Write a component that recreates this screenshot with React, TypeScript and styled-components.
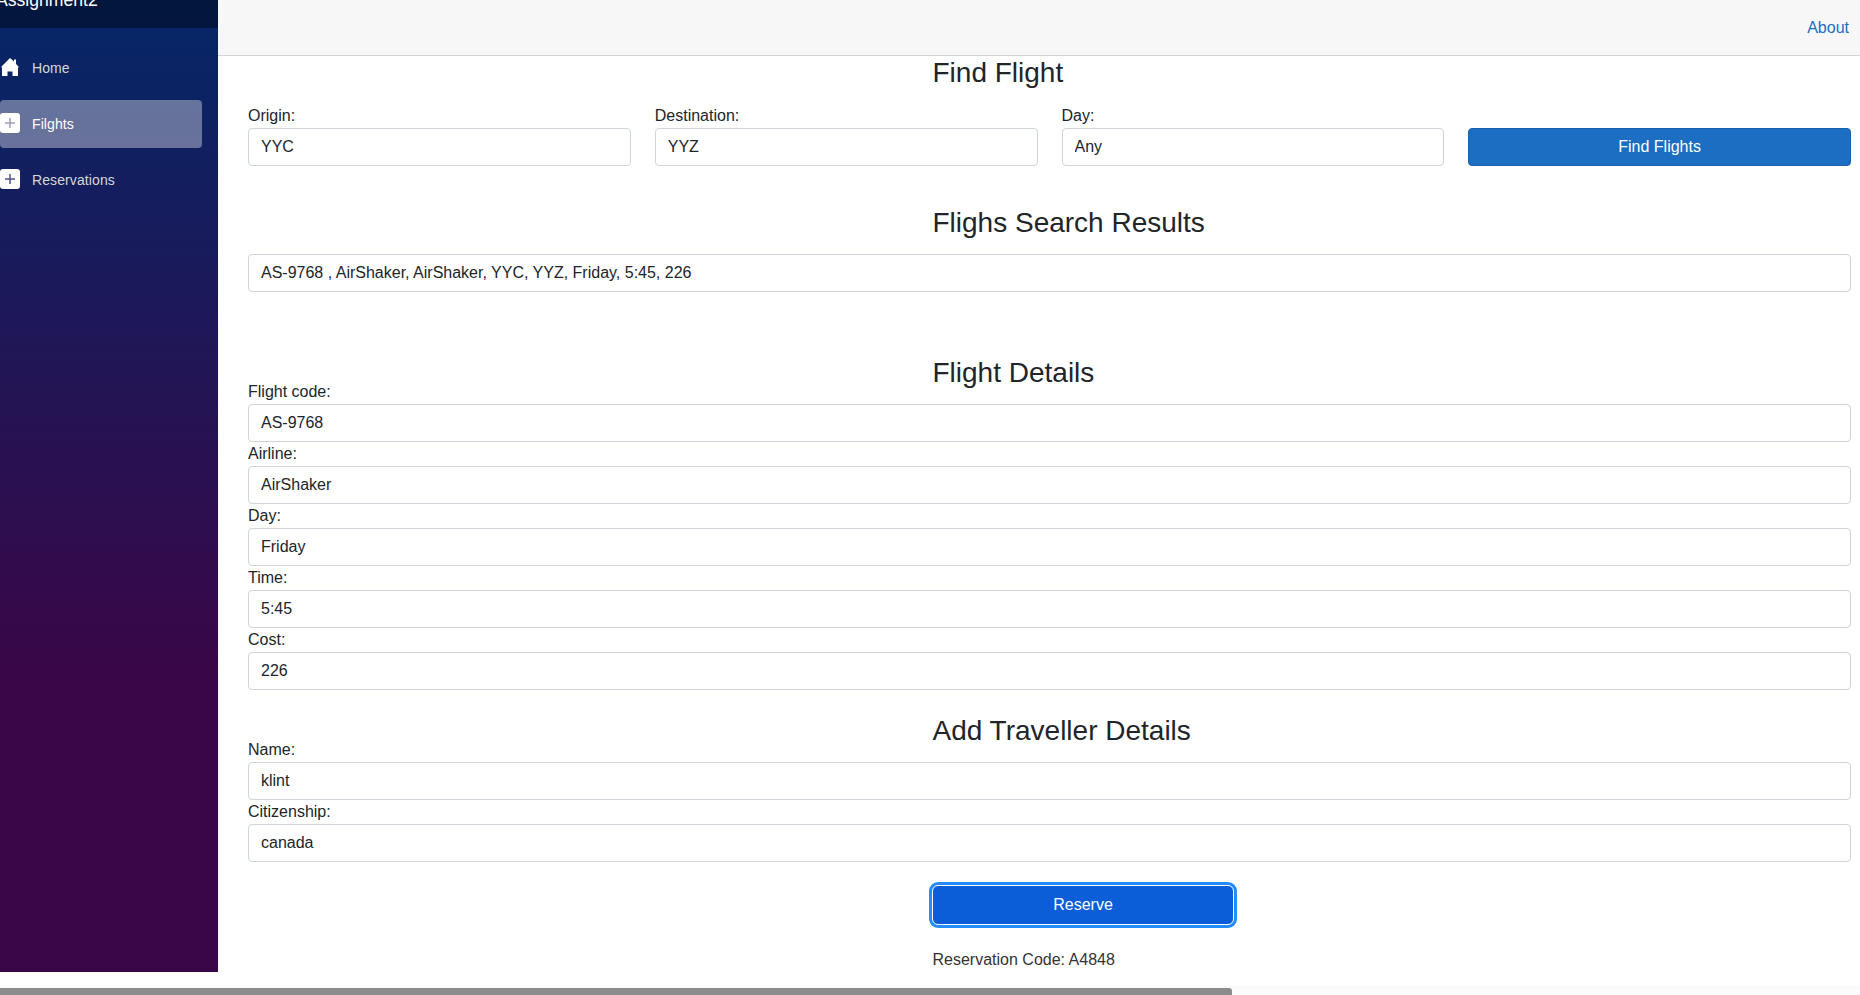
import React from "react";
import styled, { createGlobalStyle } from "styled-components";

const GlobalStyle = createGlobalStyle`
  html, body {
    margin: 0;
    padding: 0;
    height: 100%;
    overflow: hidden;
    background: #fff;
  }
  body {
    font-family: "Liberation Sans", Arial, sans-serif;
    font-size: 16px;
    line-height: 1.5;
    color: #212529;
  }
  * {
    box-sizing: border-box;
  }
`;

const Page = styled.div`
  height: 995px;
  display: flex;
  flex-direction: column;
  overflow: hidden;
`;

const Columns = styled.div`
  display: flex;
  height: 972px;
`;

const Sidebar = styled.nav`
  width: 218px;
  flex: none;
  background-image: linear-gradient(180deg, #052767 0%, #3a0647 70%);
`;

const Brand = styled.div`
  height: 28px;
  display: flex;
  align-items: flex-end;
  overflow: hidden;
  background: rgba(0, 0, 0, 0.4);
  color: #fff;
  font-size: 17.6px;
  line-height: 26px;
`;

const BrandText = styled.span`
  display: block;
  margin-left: -4px;
  padding-bottom: 15px;
`;

const NavList = styled.div`
  display: flex;
  flex-direction: column;
  gap: 8px;
  padding-top: 16px;
`;

const NavItem = styled.a<{ $active?: boolean }>`
  width: 202px;
  height: 48px;
  display: flex;
  align-items: center;
  gap: 12px;
  border-radius: 4px;
  font-size: 14px;
  letter-spacing: 0.1px;
  color: ${(p) => (p.$active ? "#fff" : "#d7d7d7")};
  background: ${(p) => (p.$active ? "rgba(255, 255, 255, 0.37)" : "transparent")};
`;

const IconSlot = styled.span`
  width: 20px;
  height: 20px;
  flex: none;
  display: flex;
`;

const PlusSvg = styled.svg`
  margin-top: -1px;
`;

const Main = styled.main`
  flex: 1;
  min-width: 0;
`;

const TopRow = styled.header`
  height: 56px;
  display: flex;
  align-items: center;
  justify-content: flex-end;
  padding-right: 11px;
  background: #f7f7f7;
  border-bottom: 1px solid #d6d5d5;
`;

const AboutLink = styled.a`
  color: #1b6ec2;
`;

const Content = styled.div`
  padding: 0 9px 0 30px;
`;

const Heading = styled.h3<{ $top: number; $overlap?: boolean }>`
  margin: ${(p) => p.$top}px 0 ${(p) => (p.$overlap ? "-9.6px" : "0")} 684.5px;
  font-size: 28px;
  font-weight: 500;
  line-height: 33.6px;
`;

const SearchRow = styled.div`
  display: grid;
  grid-template-columns: repeat(4, 1fr);
  column-gap: 24px;
  margin-top: 14.4px;
  align-items: end;
`;

const Field = styled.div`
  display: flex;
  flex-direction: column;
`;

const Label = styled.label`
  height: 24px;
  line-height: 24px;
`;

const Input = styled.input`
  width: 100%;
  height: 38px;
  padding: 6px 12px;
  font: inherit;
  color: #212529;
  background: #fff;
  border: 1px solid #ced4da;
  border-radius: 4px;
  outline: none;
`;

const SearchButton = styled.button`
  height: 38px;
  font: inherit;
  color: #fff;
  background: #1b6ec2;
  border: 1px solid #1861ac;
  border-radius: 4px;
`;

const ResultBox = styled.div`
  height: 38px;
  margin-top: 14.4px;
  padding: 6px 12px;
  color: #212529;
  border: 1px solid #ced4da;
  border-radius: 4px;
`;

const DetailForm = styled.div`
  display: flex;
  flex-direction: column;
`;

const ReserveButton = styled.button`
  display: block;
  width: 302px;
  height: 40px;
  margin: 23px 0 0 684px;
  font: inherit;
  color: #fff;
  background: #0b5ed7;
  border: 1px solid #fff;
  border-radius: 6px;
  box-shadow: 0 0 0 3px #258cfb;
`;

const CodeLine = styled.p`
  margin: 23px 0 0 684.5px;
  color: #333;
`;

const ScrollTrack = styled.div`
  height: 10px;
  margin-top: 13px;
  padding-top: 3px;
  background: #fbfbfb;
`;

const ScrollThumb = styled.div`
  width: 1232px;
  height: 7px;
  background: #8c8c8c;
  border-radius: 0 3px 0 0;
`;

const HomeIcon = () => (
  <svg width="20" height="20" viewBox="0 0 20 20">
    <path
      fill="#fff"
      d="M10 0 L14 3.5 V1.5 H16 V6 L18.5 8.5 V9.5 H18 V18 H12.5 V13.5 H7.5 V18 H2 V9.5 H1.5 V8.5 Z"
    />
  </svg>
);

const PlusIcon = ({ color }: { color: string }) => (
  <PlusSvg width="20" height="20" viewBox="0 0 20 20">
    <rect width="20" height="20" rx="3" fill="#fff" />
    <path d="M10 5 V15 M5 10 H15" stroke={color} strokeWidth="1.5" />
  </PlusSvg>
);

const fields = [
  { label: "Flight code:", value: "AS-9768" },
  { label: "Airline:", value: "AirShaker" },
  { label: "Day:", value: "Friday" },
  { label: "Time:", value: "5:45" },
  { label: "Cost:", value: "226" },
];

const travellerFields = [
  { label: "Name:", value: "klint" },
  { label: "Citizenship:", value: "canada" },
];

export default function App() {
  return (
    <Page>
      <GlobalStyle />
      <Columns>
        <Sidebar>
          <Brand>
            <BrandText>Assignment2</BrandText>
          </Brand>
          <NavList>
            <NavItem>
              <IconSlot>
                <HomeIcon />
              </IconSlot>
              Home
            </NavItem>
            <NavItem $active>
              <IconSlot>
                <PlusIcon color="#9aa0b8" />
              </IconSlot>
              Filghts
            </NavItem>
            <NavItem>
              <IconSlot>
                <PlusIcon color="#4f5488" />
              </IconSlot>
              Reservations
            </NavItem>
          </NavList>
        </Sidebar>
        <Main>
          <TopRow>
            <AboutLink>About</AboutLink>
          </TopRow>
          <Content>
            <Heading $top={0}>Find Flight</Heading>
            <SearchRow>
              <Field>
                <Label>Origin:</Label>
                <Input readOnly value="YYC" />
              </Field>
              <Field>
                <Label>Destination:</Label>
                <Input readOnly value="YYZ" />
              </Field>
              <Field>
                <Label>Day:</Label>
                <Input readOnly value="Any" />
              </Field>
              <SearchButton>Find Flights</SearchButton>
            </SearchRow>
            <Heading $top={40}>Flighs Search Results</Heading>
            <ResultBox>AS-9768 , AirShaker, AirShaker, YYC, YYZ, Friday, 5:45, 226</ResultBox>
            <Heading $top={64} $overlap>
              Flight Details
            </Heading>
            <DetailForm>
              {fields.map((f) => (
                <Field key={f.label}>
                  <Label>{f.label}</Label>
                  <Input readOnly value={f.value} />
                </Field>
              ))}
            </DetailForm>
            <Heading $top={24} $overlap>
              Add Traveller Details
            </Heading>
            <DetailForm>
              {travellerFields.map((f) => (
                <Field key={f.label}>
                  <Label>{f.label}</Label>
                  <Input readOnly value={f.value} />
                </Field>
              ))}
            </DetailForm>
            <ReserveButton>Reserve</ReserveButton>
            <CodeLine>Reservation Code: A4848</CodeLine>
          </Content>
        </Main>
      </Columns>
      <ScrollTrack>
        <ScrollThumb />
      </ScrollTrack>
    </Page>
  );
}
